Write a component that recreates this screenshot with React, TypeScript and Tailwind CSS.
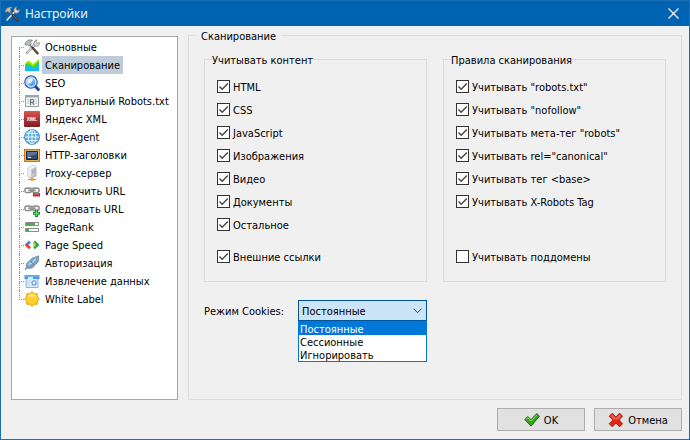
import React, { useState } from "react";

type IconProps = { className?: string };

const ToolsIcon: React.FC<IconProps> = ({ className = "size-4" }) => (
  <svg viewBox="0 0 16 16" className={className} aria-hidden="true">
    <path d="M3 14 11 5.5" stroke="#6d7277" strokeWidth="2.4" strokeLinecap="round" />
    <path d="M3 14 11 5.5" stroke="#e6e9eb" strokeWidth="1.2" strokeLinecap="round" />
    <path d="M10.2 5.8c-.9-2 .1-4.6 2.6-5L11.9 3l1.3 1.4 2.3-.7c.1 2.6-2 4.1-4 3.4z" fill="#d8dcdf" stroke="#75797d" strokeWidth=".7" />
    <path d="m5.5 5.5 3 3.3" stroke="#75797d" strokeWidth="1.8" />
    <path d="m8.8 9 4.7 5.3" stroke="#4a2b2b" strokeWidth="2.4" strokeLinecap="round" />
    <path d="m9 9 4.2 4.8" stroke="#a07a74" strokeWidth=".8" />
    <path d="M.8 5.2 2.6 2.6C4.2.9 6.3.5 8.5 1.3L6.3 2.8l.9 1.9-2 2-1.7-1.4-1.3 1.3z" fill="#bcc1c4" stroke="#676c70" strokeWidth=".8" />
  </svg>
);

const ScanIcon = () => (
  <svg viewBox="0 0 16 16" className="size-4" aria-hidden="true">
    <path d="m1 7 4-3 4 4 6-5v11H1z" fill="#14bdf0" />
    <path d="m1 6 3.5-2.5L9 7l6-5v4L9.5 11 5 7.5 1 10z" fill="#a4ee00" />
    <path d="m1 8 3.5-2L9.3 9.5 15 4v2.2L9.5 11 5 7.5 1 10z" fill="#37cf20" />
  </svg>
);

const SeoIcon = () => (
  <svg viewBox="0 0 16 16" className="size-4" aria-hidden="true">
    <path d="m11 11 3.3 3.5" stroke="#1745a0" strokeWidth="3" strokeLinecap="round" />
    <circle cx="7" cy="7" r="6.2" fill="#4d8ce0" stroke="#2e5fae" strokeWidth="1.2" />
    <circle cx="7" cy="7" r="5" fill="#8dbdf5" stroke="#deedff" />
    <path d="M3.5 8.7A4 4 0 0 1 9 3.5L7.5 8z" fill="#e3f1ff" />
    <path d="M6 9.2c2-2.8 3.3-3.5 5-2.8a4 4 0 0 1-5.5 4.2z" fill="#5aa1ed" />
  </svg>
);

const RobotsIcon = () => (
  <svg viewBox="0 0 16 16" className="size-4" aria-hidden="true">
    <path d="M1.5 2.5h13v11h-13z" fill="#f7f8f9" stroke="#929da7" />
    <path d="M1 2h14v2.5H1z" fill="#9ba7b1" />
    <path d="M3 6.5h2m-2 2h2m-2 2h2m6-4h2m-2 2h2m-2 2h2" stroke="#c3cad0" />
    <path d="M6.5 12V6.5h2a1.3 1.3 0 0 1 0 2.8h-2m2 0L10 12" fill="none" stroke="#68737e" strokeWidth="1.2" />
  </svg>
);

const XmlIcon = () => (
  <svg viewBox="0 0 16 16" className="size-4" aria-hidden="true">
    <defs>
      <linearGradient id="xmlRed" x2="0" y2="1">
        <stop stopColor="#d85750" />
        <stop offset=".55" stopColor="#b12f31" />
        <stop offset="1" stopColor="#792025" />
      </linearGradient>
    </defs>
    <rect width="16" height="16" rx="1" fill="url(#xmlRed)" />
    <text x="8" y="10" textAnchor="middle" fontFamily="Liberation Sans, sans-serif" fontSize="5" fontWeight="bold" fill="#fff">
      XML
    </text>
  </svg>
);

const GlobeIcon = () => (
  <svg viewBox="0 0 16 16" className="size-4" aria-hidden="true">
    <circle cx="8" cy="8" r="7.5" fill="#62acdc" stroke="#4a94cb" />
    <path d="M8 1v14M1 8h14M2.5 4.5h11m-11 7h11" stroke="#e7f6ff" />
    <ellipse cx="8" cy="8" rx="3.8" ry="7" fill="none" stroke="#e7f6ff" />
    <path d="M2 6C3 2 7 .7 10 1.5 8 2 4 4 2 6z" fill="#d3ebf9" opacity=".7" />
  </svg>
);

const HeadersIcon = () => (
  <svg viewBox="0 0 16 16" className="size-4" aria-hidden="true">
    <path d="M.7 2.7h14.6v11.6H.7z" fill="#ffe6a8" stroke="#c87913" strokeWidth="1.4" />
    <path d="M2.5 4.5h11v8h-11z" fill="#344a70" stroke="#17243d" />
    <path d="M3 5h10v2L3 10z" fill="#59749a" />
    <path d="M4 10.5h3" stroke="#fff" />
  </svg>
);

const ProxyIcon = () => (
  <svg viewBox="0 0 16 16" className="size-4" aria-hidden="true">
    <path d="m4 3 5-2.5L12 2v9l-5 2-3-1.5z" fill="#c3c8d2" stroke="#8b929f" strokeWidth=".7" />
    <path d="m4 3 3 1.3V13l-3-1.5z" fill="#e9edf4" />
    <path d="m4 3 5-2.5L12 2 7 4.3z" fill="#f8f8fb" />
    <path d="m8 6 3-1.2M8 8l3-1.2" stroke="#8d96a4" strokeWidth=".8" />
    <path d="M4 14.5h8" stroke="#8b98a6" />
    <path d="M6.5 13h3v3h-3z" fill="#f2a33a" />
  </svg>
);

const Chain = () => (
  <>
    <rect x=".8" y="5" width="7" height="4.6" rx="2.3" fill="#f4f4f4" stroke="#8a8a8a" strokeWidth="1.4" />
    <rect x="8.2" y="5" width="7" height="4.6" rx="2.3" fill="#f4f4f4" stroke="#8a8a8a" strokeWidth="1.4" />
    <path d="M4.5 7.3h7" stroke="#777" strokeWidth="2" />
    <path d="M4.5 7h7" stroke="#c6c6c6" strokeWidth=".8" />
  </>
);

const ExcludeIcon = () => (
  <svg viewBox="0 0 16 16" className="size-4" aria-hidden="true">
    <Chain />
    <rect x="9" y="10" width="7" height="3.5" rx=".5" fill="#c5282d" />
    <path d="M10 11h5" stroke="#ef777a" />
  </svg>
);

const FollowIcon = () => (
  <svg viewBox="0 0 16 16" className="size-4" aria-hidden="true">
    <Chain />
    <path d="M11 8.5h3v2.3h2v3h-2V16h-3v-2.2H9v-3h2z" fill="#188f29" />
    <path d="M12.5 9.5V15m-2.7-2.7h5.4" stroke="#6ce66a" />
  </svg>
);

const RankIcon = () => (
  <svg viewBox="0 0 16 16" className="size-4" aria-hidden="true">
    <path d="M1.5 3.5h13v3h-13zm0 6h13v3h-13z" fill="#fff" stroke="#8b8b8b" />
    <path d="M2 4h9v2H2zm0 6h3v2H2z" fill="#51a653" />
  </svg>
);

const SpeedIcon = () => (
  <svg viewBox="0 0 16 16" className="size-4" aria-hidden="true">
    <path d="m6 4.6-4.2 3.6" stroke="#4285f4" strokeWidth="2.8" />
    <path d="m1.8 7.4 4.3 3.8" stroke="#ea4335" strokeWidth="2.8" />
    <path d="m10 4.6 4.3 3.9" stroke="#30a852" strokeWidth="2.8" />
    <path d="M14.2 7.4 10 11.2" stroke="#30a852" strokeWidth="2.8" />
    <path d="M9 4.5 12 7 9 9z" fill="#fbbc05" />
  </svg>
);

const AuthIcon = () => (
  <svg viewBox="0 0 16 16" className="size-4" aria-hidden="true">
    <path d="m1 14.5 3-3" stroke="#688aad" strokeWidth="1.4" />
    <path d="M3 12.7c-1.3-2-.8-4.7 1.5-6.3l1.8-.3.3-1.6C9 2 12 2.3 14.7.8c-.4 2 .6 4.4-1 6.7-1 1.3-1.8 1.7-2.8 1.9l-.8 2.1C7.8 13.4 5 14 3 12.7z" fill="#7fa3c4" stroke="#587fa4" strokeWidth=".7" />
    <path d="m4.4 10.3 2-2.3 1 .4 4.5-4.7" fill="none" stroke="#bcd5ea" strokeWidth="1.5" />
    <path d="m6.4 6.5 3.8 3.2" stroke="#4e7aa0" />
  </svg>
);

const ExtractIcon = () => (
  <svg viewBox="0 0 16 16" className="size-4" aria-hidden="true">
    <path d="M2 5h12v9.5H2z" fill="#dcebfa" stroke="#89b5e4" />
    <path d="M.5 2h15v4H.5z" fill="#4a98e4" />
    <path d="M1 2.5h14v1.2H1z" fill="#7ab8f2" />
    <path d="M4 4h5v2H4z" fill="#d9ecfc" />
    <circle cx="10" cy="9.8" r="2" fill="#fff" stroke="#5c9be0" strokeWidth="1.2" />
    <path d="M3 8h3m-3 2h3m-3 2h3" stroke="#c1d9f1" />
  </svg>
);

const LabelIcon = () => (
  <svg viewBox="0 0 16 16" className="size-4" aria-hidden="true">
    <path d="m8 .6 2.2 2.2h3V5.9L15.4 8l-2.2 2.1v3.1h-3L8 15.4l-2.2-2.2h-3v-3.1L.6 8l2.2-2.1V2.8h3z" fill="#ffce29" stroke="#dc9b0c" strokeLinejoin="round" />
    <path d="M3.8 6.4V3.8h2.5L8 2l1.7 1.8h2.5v2.6z" fill="#ffe264" />
  </svg>
);

const OkIcon = () => (
  <svg viewBox="0 0 16 16" className="size-4" aria-hidden="true">
    <path d="m.7 7.6 3-3L7 7.7l5.8-6.2 2.6 2.7L7.2 14z" fill="#35a51b" stroke="#26611b" strokeLinejoin="round" />
    <path d="m2 7.4 1.7-1.7L7 9l5.8-6.1" fill="none" stroke="#8ade64" />
  </svg>
);

const CancelIcon = () => (
  <svg viewBox="0 0 16 16" className="size-4" aria-hidden="true">
    <path d="m4.2 1.2 3.7 3.7 3.7-3.7 3 3L10.9 8l3.7 3.7-3 3.1L7.9 11l-3.7 3.8-3-3.1L4.9 8 1.2 4.2z" fill="#e8230d" stroke="#a42520" strokeLinejoin="round" />
    <path d="m4.2 2.5 3.7 3.8 3.7-3.8 1.7 1.7L10 7.5H5.8L2.5 4.2z" fill="#e8625a" />
  </svg>
);

const sections = [
  { title: "Основные", icon: <ToolsIcon /> },
  { title: "Сканирование", icon: <ScanIcon /> },
  { title: "SEO", icon: <SeoIcon /> },
  { title: "Виртуальный Robots.txt", icon: <RobotsIcon /> },
  { title: "Яндекс XML", icon: <XmlIcon /> },
  { title: "User-Agent", icon: <GlobeIcon /> },
  { title: "HTTP-заголовки", icon: <HeadersIcon /> },
  { title: "Proxy-сервер", icon: <ProxyIcon /> },
  { title: "Исключить URL", icon: <ExcludeIcon /> },
  { title: "Следовать URL", icon: <FollowIcon /> },
  { title: "PageRank", icon: <RankIcon /> },
  { title: "Page Speed", icon: <SpeedIcon /> },
  { title: "Авторизация", icon: <AuthIcon /> },
  { title: "Извлечение данных", icon: <ExtractIcon /> },
  { title: "White Label", icon: <LabelIcon /> },
];

const contentTypes = ["HTML", "CSS", "JavaScript", "Изображения", "Видео", "Документы", "Остальное"];

const rules = [
  'Учитывать "robots.txt"',
  'Учитывать "nofollow"',
  'Учитывать мета-тег "robots"',
  'Учитывать rel="canonical"',
  "Учитывать тег <base>",
  "Учитывать X-Robots Tag",
];

const cookieModes = ["Постоянные", "Сессионные", "Игнорировать"];

const CheckRow: React.FC<{ label: string; checked?: boolean }> = ({ label, checked = true }) => (
  <label className="flex h-[23px] items-center gap-[3px]">
    <span className="grid shrink-0">
      <input
        type="checkbox"
        defaultChecked={checked}
        className="peer col-start-1 row-start-1 size-[13px] appearance-none border border-[#333] bg-white"
      />
      <svg viewBox="0 0 13 13" className="pointer-events-none col-start-1 row-start-1 hidden size-[13px] peer-checked:block">
        <path d="m2.5 6.5 2.7 2.7 5.6-5.6" fill="none" stroke="#444" strokeWidth="1.4" />
      </svg>
    </span>
    <span className="pt-[2px]">{label}</span>
  </label>
);

const App: React.FC = () => {
  const [section, setSection] = useState("Сканирование");
  const [mode, setMode] = useState("Постоянные");
  const [open, setOpen] = useState(true);

  return (
    <div className="flex min-h-screen flex-col border border-[#1a6fb7] bg-[#f0f0f0] font-['DejaVu_Sans_Condensed','DejaVu_Sans',sans-serif] text-[11px] leading-4 text-black">
      {/* Заголовок окна */}
      <header className="flex h-[25px] items-center bg-[#0063b1] pr-2 pl-[3px] font-['Open_Sans',sans-serif] text-xs text-white">
        <ToolsIcon className="size-4" />
        <h1 className="ml-[5px] flex-1">Настройки</h1>
        <button type="button" aria-label="Закрыть" className="p-[2px]">
          <svg viewBox="0 0 11 11" className="size-[11px]">
            <path d="m.5.5 10 10m0-10-10 10" stroke="#fff" strokeWidth="1.1" />
          </svg>
        </button>
      </header>

      <main className="flex flex-1 gap-[10px] pr-[7px] pl-[10px]">
        {/* Дерево разделов */}
        <nav className="mt-[10px] w-[167px] shrink-0 border border-[#a5a7ac] bg-white pt-px pl-[7px]">
          <ul>
            {sections.map((item, index) => (
              <li key={item.title} className="flex h-[18px] items-center">
                <span className="flex w-[5px] shrink-0 flex-col self-stretch">
                  <span
                    className={
                      index === 0
                        ? "flex-1 border-b border-dotted border-[#909090]"
                        : "flex-1 border-b border-l border-dotted border-[#909090]"
                    }
                  />
                  <span
                    className={index === sections.length - 1 ? "flex-1" : "flex-1 border-l border-dotted border-[#909090]"}
                  />
                </span>
                {item.icon}
                <button
                  type="button"
                  onClick={() => setSection(item.title)}
                  className={
                    item.title === section
                      ? "ml-[2px] h-[18px] bg-[#bfcddb] px-[3px] pt-[2px] whitespace-nowrap"
                      : "ml-[2px] h-[18px] px-[3px] pt-[2px] whitespace-nowrap"
                  }
                >
                  {item.title}
                </button>
              </li>
            ))}
          </ul>
        </nav>

        <fieldset className="min-w-0 flex-1 border border-[#dcdcdc] px-[15px] pt-[6px]">
          <legend className="-ml-[8px] px-[5px] pt-1 leading-[14px]">Сканирование</legend>

          <div className="grid grid-cols-2 gap-4">
            <fieldset className="flex min-w-0 flex-col border border-[#dcdcdc] px-3 pt-[7px] pb-[13px]">
              <legend className="-ml-[5px] pt-1 leading-[14px]">Учитывать контент</legend>
              {contentTypes.map((label) => (
                <CheckRow key={label} label={label} />
              ))}
              <div className="mt-[9px]">
                <CheckRow label="Внешние ссылки" />
              </div>
            </fieldset>

            <fieldset className="flex min-w-0 flex-col border border-[#dcdcdc] px-3 pt-[7px] pb-[13px]">
              <legend className="-ml-[5px] pt-1 leading-[14px]">Правила сканирования</legend>
              {rules.map((label) => (
                <CheckRow key={label} label={label} />
              ))}
              <div className="mt-auto">
                <CheckRow label="Учитывать поддомены" checked={false} />
              </div>
            </fieldset>
          </div>

          {/* Режим cookies */}
          <div className="mt-[18px] grid grid-cols-2 gap-4">
            <div className="flex items-center">
              <label htmlFor="cookies" className="w-[94px] shrink-0 pt-[2px] whitespace-nowrap">
                Режим Cookies:
              </label>
              <div className="relative flex h-[21px] min-w-0 flex-1 items-center border border-[#005499] bg-[#cce4f7]">
                <select
                  id="cookies"
                  value={mode}
                  onChange={(e) => setMode(e.target.value)}
                  className="w-full appearance-none bg-transparent pt-[2px] pl-[3px] outline-none"
                >
                  {cookieModes.map((item) => (
                    <option key={item}>{item}</option>
                  ))}
                </select>
                <svg viewBox="0 0 9 6" className="pointer-events-none absolute right-1 h-[6px] w-[9px]">
                  <path d="m.5.7 4 4 4-4" fill="none" stroke="#444" />
                </svg>
                {open && (
                  <ul role="listbox" className="absolute top-full -right-px -left-px mt-px border border-[#0078d7] bg-white leading-[13px]">
                    {cookieModes.map((item) => (
                      <li
                        key={item}
                        role="option"
                        aria-selected={item === mode}
                        onClick={() => {
                          setMode(item);
                          setOpen(false);
                        }}
                        className={item === mode ? "h-[13px] bg-[#0078d7] pt-px pl-px text-white" : "h-[13px] pt-px pl-px"}
                      >
                        {item}
                      </li>
                    ))}
                  </ul>
                )}
              </div>
            </div>
          </div>
        </fieldset>
      </main>

      <footer className="flex justify-end gap-[9px] pt-2 pr-[7px] pb-2">
        <button type="button" className="flex h-[23px] w-[88px] items-center justify-center gap-1 border border-[#adadad] bg-[#e1e1e1]">
          <OkIcon />
          <span className="pt-[2px]">OK</span>
        </button>
        <button type="button" className="flex h-[23px] w-[88px] items-center justify-center gap-1 border border-[#adadad] bg-[#e1e1e1]">
          <CancelIcon />
          <span className="pt-[2px]">Отмена</span>
        </button>
      </footer>
    </div>
  );
};

export default App;
